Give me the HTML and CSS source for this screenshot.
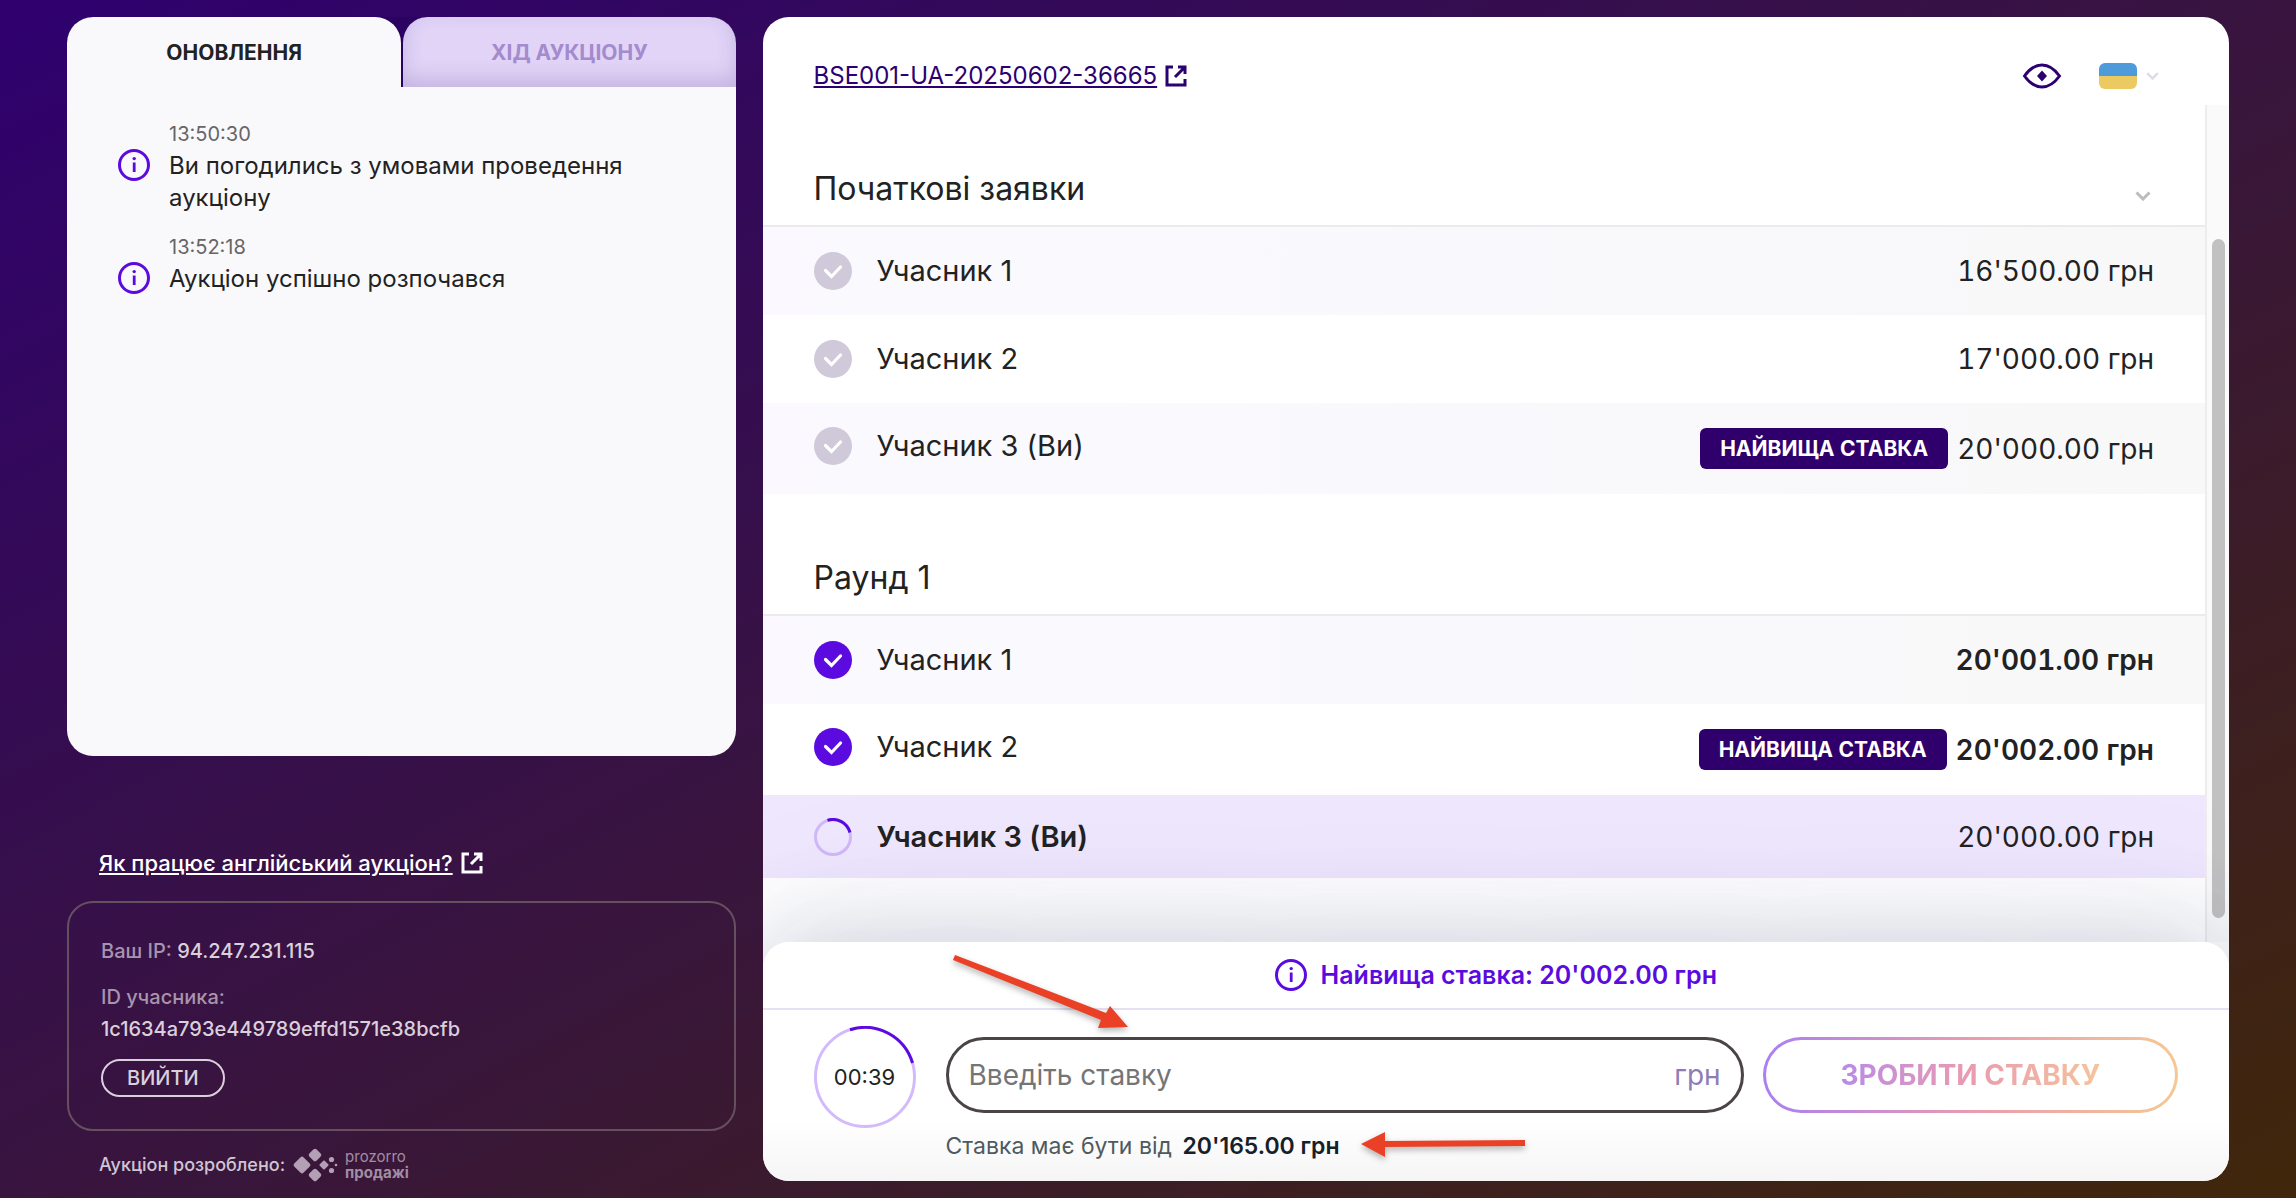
FILE: index.html
```html
<!DOCTYPE html>
<html lang="uk">
<head>
    <meta charset="UTF-8">
    <title>Аукціон</title>
    <link rel="stylesheet" href="styles.css">
</head>
<body>
    <!-- shared icons -->
    <svg class="sprite" aria-hidden="true">
        <symbol id="icon-info" viewBox="0 0 32 32">
            <circle cx="16" cy="16" r="14.5" fill="none" stroke="currentColor" stroke-width="3"/>
            <path d="M16.2 13.500V23" fill="none" stroke="currentColor" stroke-width="2.8"/>
            <circle cx="16.2" cy="9.6" r="1.7" fill="currentColor"/>
        </symbol>
        <symbol id="icon-open" viewBox="0 0 22 22">
            <path d="M8 2H2V20H20V14M13 2H20V9M20 2L10 12" fill="none" stroke="currentColor" stroke-width="3"/>
        </symbol>
        <symbol id="icon-check" viewBox="0 0 38 38">
            <circle cx="19" cy="19" r="19" fill="currentColor"/>
            <path d="M11.5 18.5L17.5 24.5L26.5 15" fill="none" stroke="#fff" stroke-width="3.2" stroke-linecap="round"/>
        </symbol>
        <symbol id="icon-chevron" viewBox="0 0 16 10">
            <path d="M1.5 1.5L8 8L14.5 1.5" fill="none" stroke="currentColor" stroke-width="3"/>
        </symbol>
    </svg>

    <div class="page">
        <aside class="sidebar">
            <section class="updates">
                <div class="tabs">
                    <button class="tab active" type="button">ОНОВЛЕННЯ</button>
                    <button class="tab" type="button">ХІД АУКЦІОНУ</button>
                </div>
                <ul class="log">
                    <li>
                        <svg class="info"><use href="#icon-info"/></svg>
                        <div>
                            <time>13:50:30</time>
                            <p>Ви погодились з умовами проведення аукціону</p>
                        </div>
                    </li>
                    <li>
                        <svg class="info"><use href="#icon-info"/></svg>
                        <div>
                            <time>13:52:18</time>
                            <p>Аукціон успішно розпочався</p>
                        </div>
                    </li>
                </ul>
            </section>

            <a class="help-link" href="#"><span>Як працює англійський аукціон?</span><svg class="open"><use href="#icon-open"/></svg></a>

            <section class="user">
                <p><span>Ваш IP:</span> 94.247.231.115</p>
                <p><span>ID учасника:</span><br>1c1634a793e449789effd1571e38bcfb</p>
                <button class="logout" type="button">ВИЙТИ</button>
            </section>

            <footer class="credits">
                Аукціон розроблено:
                <svg class="logo" viewBox="0 0 44 32">
                    <g fill="#b3a0b7">
                        <rect x="-6.5" y="-6.5" width="13" height="13" rx="2" transform="translate(9 16) rotate(45)"/>
                        <rect x="-5" y="-5" width="10" height="10" rx="2" transform="translate(22 6) rotate(45)"/>
                        <rect x="-5" y="-5" width="10" height="10" rx="2" transform="translate(22 26) rotate(45)"/>
                        <rect x="-3.500" y="-3.500" width="7" height="7" rx="1" transform="translate(31 16) rotate(45)"/>
                        <circle cx="38.5" cy="10.5" r="2.6"/>
                        <circle cx="38.5" cy="21.5" r="2.6"/>
                        <circle cx="43" cy="16" r="1.3"/>
                    </g>
                </svg>
                <span class="brand">prozorro<b>продажі</b></span>
            </footer>
        </aside>

        <main class="auction">
            <header class="top">
                <a class="lot-link" href="#"><span>BSE001-UA-20250602-36665</span><svg class="open"><use href="#icon-open"/></svg></a>
                <button class="vision" type="button" aria-label="Доступність">
                    <svg viewBox="0 0 40 26">
                        <path d="M2.5 13C7.5 6 13 2 20 2S32.500 6 37.500 13C32.500 20 27 24 20 24S7.500 20 2.500 13Z" fill="none" stroke="currentColor" stroke-width="3"/>
                        <path d="M20 7.500L25 13L20 18.500L15 13Z" fill="currentColor"/>
                    </svg>
                </button>
                <label class="lang">
                    <select aria-label="Мова"><option aria-label="Українська"></option></select>
                    <svg class="chevron"><use href="#icon-chevron"/></svg>
                </label>
            </header>

            <div class="content">
                <div class="rounds">
                    <h2>Початкові заявки <svg class="chevron"><use href="#icon-chevron"/></svg></h2>
                    <table class="bids">
                        <tr>
                            <th><div class="name"><svg class="status"><use href="#icon-check"/></svg>Учасник 1</div></th>
                            <td>16'500.00 грн</td>
                        </tr>
                        <tr>
                            <th><div class="name"><svg class="status"><use href="#icon-check"/></svg>Учасник 2</div></th>
                            <td>17'000.00 грн</td>
                        </tr>
                        <tr class="best">
                            <th><div class="name"><svg class="status"><use href="#icon-check"/></svg>Учасник 3 (Ви)</div></th>
                            <td><div class="amount"><span class="badge">НАЙВИЩА СТАВКА</span>20'000.00 грн</div></td>
                        </tr>
                    </table>

                    <h2>Раунд 1</h2>
                    <table class="bids live">
                        <tr>
                            <th><div class="name"><svg class="status"><use href="#icon-check"/></svg>Учасник 1</div></th>
                            <td>20'001.00 грн</td>
                        </tr>
                        <tr class="best">
                            <th><div class="name"><svg class="status"><use href="#icon-check"/></svg>Учасник 2</div></th>
                            <td><div class="amount"><span class="badge">НАЙВИЩА СТАВКА</span>20'002.00 грн</div></td>
                        </tr>
                        <tr class="current">
                            <th>
                                <div class="name">
                                    <svg class="status" viewBox="0 0 38 38" fill="none" stroke-width="3">
                                        <circle cx="19" cy="19" r="17.500" stroke="#d0b8fa"/>
                                        <path d="M13.500 2.400A17.500 17.500 0 0 1 36 14.500" stroke="#5b0be0"/>
                                    </svg>Учасник 3 (Ви)
                                </div>
                            </th>
                            <td>20'000.00 грн</td>
                        </tr>
                    </table>
                </div>
                <div class="scrollbar"><div class="thumb"></div></div>
            </div>

            <section class="bid-panel">
                <p class="best-bid"><svg class="info"><use href="#icon-info"/></svg>Найвища ставка: 20'002.00 грн</p>
                <form class="bid-form">
                    <div class="timer">
                        <svg viewBox="0 0 102 102" fill="none" stroke-width="3">
                            <circle cx="51" cy="51" r="49.500" stroke="#d3bafb"/>
                            <path d="M36 3.800A49.500 49.500 0 0 1 98.500 37" stroke="#5b0be0"/>
                        </svg>
                        <span>00:39</span>
                    </div>
                    <div class="field">
                        <div class="field-box">
                            <input id="bid" type="text" placeholder="Введіть ставку">
                            <label for="bid">грн</label>
                        </div>
                        <p class="hint">Ставка має бути від <b>20'165.00 грн</b></p>
                    </div>
                    <button class="submit" type="submit"><span>ЗРОБИТИ СТАВКУ</span></button>
                </form>
                <svg class="arrows" viewBox="0 0 600 220">
                    <g fill="#ea4025">
                        <path d="M5 10L3 15L151 75L148 83L178 82L160 61L156 68Z"/>
                        <path d="M411 199L435 187V196L575 195V201L435 202V212Z"/>
                    </g>
                </svg>
            </section>
        </main>
    </div>
</body>
</html>
```

FILE: styles.css
```css
* {
    box-sizing: border-box;
}
body {
    margin: 0;
    font-family: Inter, "Noto Sans", sans-serif;
    font-size: 22px;
    line-height: 32px;
    color: #222;
    background: linear-gradient(to bottom right, #2f006f, #38143f 50%, #40270a);
}
p, h2, ul {
    margin: 0;
    padding: 0;
}
button, input, select {
    font-family: inherit;
}
button {
    cursor: pointer;
}
.sprite {
    position: absolute;
    width: 0;
    height: 0;
}
.page {
    display: grid;
    grid-template-columns: 31fr 68fr;
    gap: 27px;
    min-height: 100vh;
    padding: 17px 67px;
}
.info {
    flex: none;
    width: 32px;
    height: 32px;
    color: #5b0be0;
}
.open {
    width: 22px;
    height: 22px;
}
.chevron {
    width: 16px;
    height: 10px;
    color: #bcbcbc;
}

/* left column */
.sidebar {
    display: flex;
    flex-direction: column;
}
.updates {
    flex: 1;
    overflow: hidden;
    background: #f9f9fc;
    border-radius: 26px;
}
.tabs {
    display: grid;
    grid-template-columns: 1fr 1fr;
    background: #2c0261;
}
.tab {
    height: 70px;
    border: 0;
    border-left: 2px solid #2c0261;
    border-radius: 26px 26px 0 0;
    background: #e1d4f7;
    box-shadow: inset 0 -8px 20px rgba(80, 50, 140, 0.2);
    font-size: 21px;
    font-weight: 700;
    color: #a38bcd;
}
.tab.active {
    border: 0;
    background: #f9f9fc;
    box-shadow: none;
    color: #222;
}
.log {
    display: flex;
    flex-direction: column;
    gap: 17px;
    padding: 31px 51px;
    list-style: none;
    font-size: 24px;
}
.log li {
    display: flex;
    gap: 19px;
}
.log .info {
    margin-top: 31px;
}
.log time {
    display: block;
    font-size: 20px;
    color: #666;
}
.help-link {
    display: flex;
    align-items: center;
    gap: 8px;
    margin: 91px 32px 22px;
    color: #fff;
    font-weight: 500;
}
.user {
    display: flex;
    flex-direction: column;
    align-items: flex-start;
    gap: 14px;
    padding: 32px;
    border: 2px solid #66505f;
    border-radius: 26px;
    font-size: 20px;
    font-weight: 500;
    color: #d9d0db;
}
.user span {
    color: #a894ae;
}
.logout {
    height: 38px;
    padding: 0 24px;
    border: 2px solid #d9d0db;
    border-radius: 19px;
    background: none;
    font-size: 20px;
    font-weight: 500;
    color: #d9d0db;
}
.credits {
    display: flex;
    align-items: center;
    gap: 8px;
    margin: 18px 32px 0;
    font-size: 18px;
    font-weight: 500;
    color: #d0c5d3;
}
.logo {
    width: 44px;
    height: 32px;
    overflow: visible;
}
.brand {
    font-size: 15px;
    line-height: 16px;
    font-weight: 400;
    color: #a18ea6;
}
.brand b {
    display: block;
}

/* auction card */
.auction {
    display: flex;
    flex-direction: column;
    overflow: hidden;
    background: #fff;
    border-radius: 26px;
}
.top {
    display: flex;
    align-items: center;
    height: 88px;
    padding: 29px 70px 0 51px;
}
.lot-link {
    display: flex;
    align-items: center;
    gap: 8px;
    margin-right: auto;
    font-size: 24px;
    color: #2c0070;
}
.vision {
    padding: 0;
    border: 0;
    background: none;
    color: #2c0070;
}
.vision svg {
    display: block;
    width: 40px;
    height: 26px;
}
.lang {
    display: flex;
    align-items: center;
    gap: 9px;
    margin-left: 37px;
}
.lang select {
    width: 38px;
    height: 26px;
    appearance: none;
    border: 0;
    border-radius: 6px;
    background: linear-gradient(#4f9bd9 50%, #ebca62 50%);
}
.lang .chevron {
    width: 13px;
    color: #dfdce6;
}
.content {
    display: flex;
    flex: 1;
}
.rounds {
    flex: 1;
}
.rounds h2 {
    display: flex;
    align-items: center;
    justify-content: space-between;
    padding: 65px 54px 18px 51px;
    border-bottom: 2px solid #ebebed;
    font-size: 32px;
    line-height: 37px;
    font-weight: 400;
}
.rounds .chevron {
    margin-top: 14px;
}
.bids {
    width: 100%;
    border-collapse: collapse;
    font-size: 28px;
}
.bids tr {
    height: 88px;
}
.bids tr.best {
    height: 91px;
}
.bids tr:nth-child(odd) {
    background: linear-gradient(to right, #fbf9ff, #f9f9fd 50%, #f8f8f8);
}
.bids th {
    padding: 0 0 0 51px;
    font-size: 29px;
    font-weight: 400;
}
.bids .best th {
    padding-bottom: 5px;
}
.bids td {
    padding: 0 51px 0 0;
    text-align: right;
    font-variant-numeric: tabular-nums;
}
.name {
    display: flex;
    align-items: center;
    gap: 25px;
}
.status {
    width: 38px;
    height: 38px;
    color: #cfc9da;
}
.live .status {
    color: #5b0be0;
}
.live td {
    font-weight: 600;
}
.bids tr.current {
    height: 83px;
    background: #efe7fd;
}
.current th {
    font-weight: 600;
}
.live .current td {
    font-weight: 400;
}
.bids .current th {
    font-weight: 600;
}
.amount {
    display: flex;
    align-items: center;
    justify-content: flex-end;
    gap: 9px;
}
.badge {
    padding: 5px 20px 4px;
    border-radius: 6px;
    background: #2f006b;
    font-size: 21px;
    font-weight: 700;
    color: #fff;
}
.scrollbar {
    width: 24px;
    padding: 134px 4px 24px 5px;
    border-left: 2px solid #ededed;
    background: #fafafa;
}
.thumb {
    width: 13px;
    height: 100%;
    border-radius: 7px;
    background: #c1c1c1;
}

/* bid form */
.bid-panel {
    position: relative;
    border-radius: 26px 26px 0 0;
    background: linear-gradient(#fff 75%, #f5f5f5);
    box-shadow: 0 -8px 90px rgba(50, 60, 110, 0.2), 0 0 200px rgba(50, 60, 110, 0.07);
}
.best-bid {
    display: flex;
    align-items: center;
    justify-content: center;
    gap: 14px;
    height: 68px;
    border-bottom: 2px solid #e6e0f2;
    font-size: 25px;
    font-weight: 600;
    color: #5b0be0;
}
.bid-form {
    display: flex;
    gap: 19px;
    padding: 16px 51px 19px;
}
.timer {
    display: grid;
    place-items: center;
    width: 102px;
    height: 102px;
    margin-right: 11px;
}
.timer svg, .timer span {
    grid-area: 1 / 1;
}
.timer svg {
    width: 102px;
    height: 102px;
}
.field {
    flex: 39;
    padding-top: 11px;
}
.field-box {
    display: flex;
    align-items: center;
    height: 76px;
    padding: 0 20px;
    border: 3px solid #4a4446;
    border-radius: 38px;
    background: #fff;
    font-size: 28px;
    color: #8f7bb5;
}
.field-box input {
    flex: 1;
    min-width: 0;
    padding: 0;
    border: 0;
    outline: 0;
    background: none;
    font-size: 28px;
}
.field-box input::placeholder {
    color: #757575;
}
.hint {
    margin-top: 17px;
    font-size: 23px;
    color: #4f5a60;
}
.hint b {
    margin-left: 4px;
    font-weight: 600;
    color: #162028;
}
.submit {
    flex: 20;
    height: 76px;
    margin-top: 11px;
    padding: 0;
    border: 3px solid transparent;
    border-radius: 38px;
    background: linear-gradient(#fff, #fff) padding-box, linear-gradient(to right, #a97ff3, #ea9bb0 50%, #f5c894) border-box;
    font-size: 28px;
    font-weight: 700;
}
.submit span {
    background: linear-gradient(to right, #b98ae8, #ea9bb0 50%, #f5c49c);
    background-clip: text;
    color: transparent;
}
/* pointers laid over the form */
.arrows {
    position: absolute;
    top: 3px;
    left: 187px;
    width: 600px;
    height: 220px;
    pointer-events: none;
    filter: drop-shadow(0 3px 3px rgba(0, 0, 0, 0.3));
}
```
